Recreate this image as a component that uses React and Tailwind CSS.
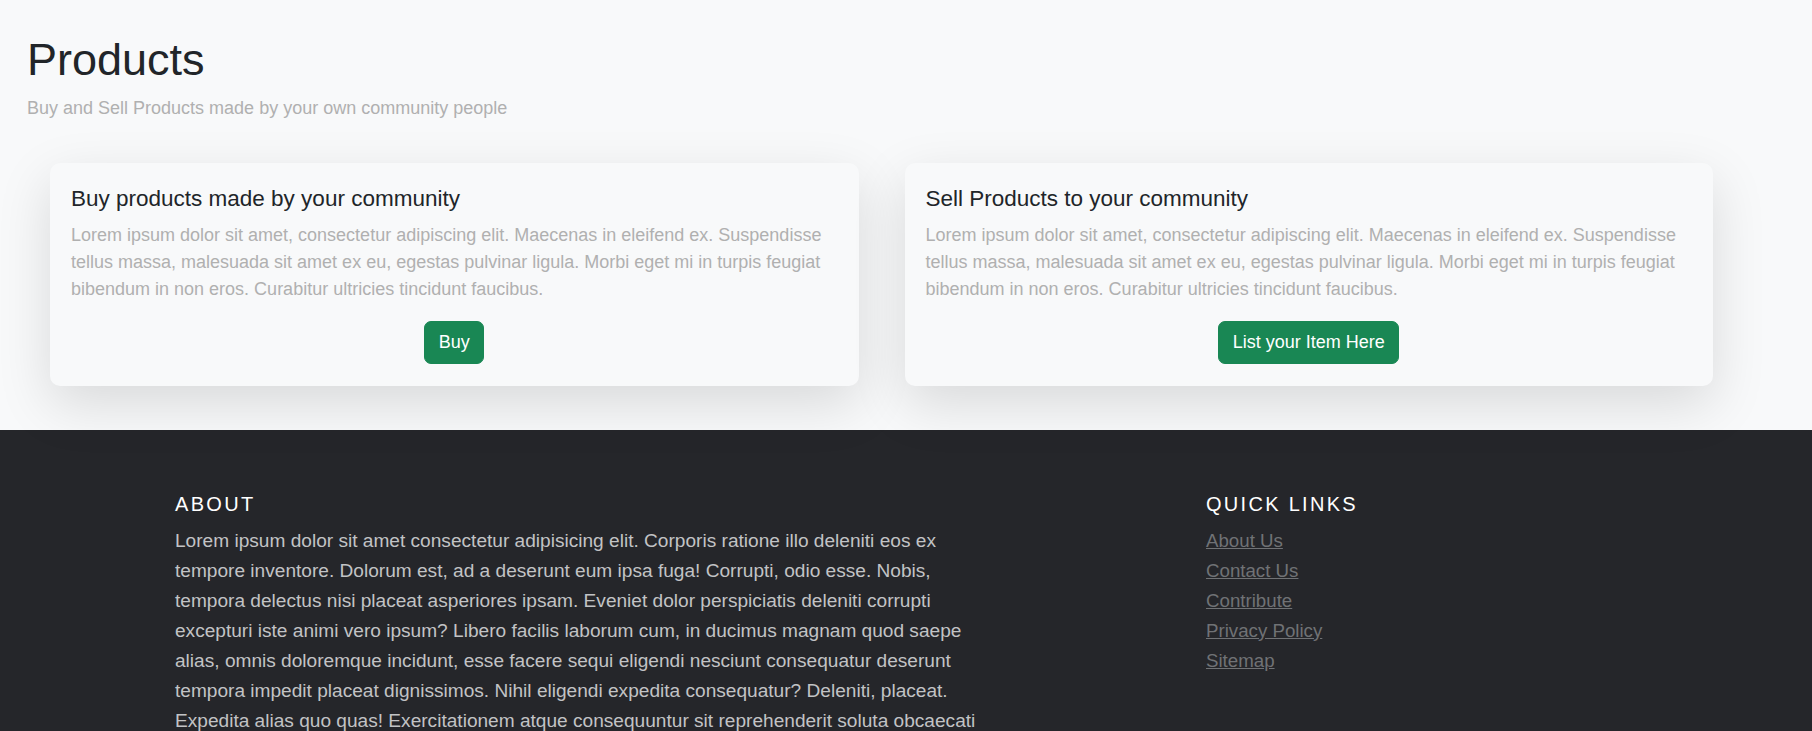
export default function App() {
  const cards = [
    {
      title: "Buy products made by your community",
      button: "Buy",
    },
    {
      title: "Sell Products to your community",
      button: "List your Item Here",
    },
  ];

  const links = ["About Us", "Contact Us", "Contribute", "Privacy Policy", "Sitemap"];

  return (
    <div className="min-h-screen bg-[#f8f9fa] font-['Liberation_Sans',Arial,sans-serif]">
      {/* Header */}
      <header className="px-[27px] pt-[33px]">
        <h1 className="text-[45px] leading-[54px] text-[#212529] mb-[8px]">Products</h1>
        <p className="text-[18px] leading-[27px] text-[#b0b0b0]">
          Buy and Sell Products made by your own community people
        </p>
      </header>

      {/* Cards */}
      <section className="flex gap-[46px] pl-[50px] pr-[99px] pt-[41px] pb-[44px]">
        {cards.map((card) => (
          <div
            key={card.title}
            className="flex-1 rounded-[10px] bg-[#f8f9fa] shadow-[0_18px_54px_rgba(0,0,0,0.13)] pt-[22px] pb-[22px] px-[21px]"
          >
            <h5 className="text-[22.5px] leading-[27px] text-[#212529] mb-[10px]">{card.title}</h5>
            <p className="text-[18px] leading-[27px] text-[#b0b0b0] mb-[18px]">
              Lorem ipsum dolor sit amet, consectetur adipiscing elit. Maecenas in eleifend ex.
              Suspendisse tellus massa, malesuada sit amet ex eu, egestas pulvinar ligula. Morbi eget
              mi in turpis feugiat bibendum in non eros. Curabitur ultricies tincidunt faucibus.
            </p>
            <div className="text-center">
              <button className="rounded-[7px] border border-[#198754] bg-[#198754] px-[13.5px] py-[6.75px] text-[18px] leading-[27px] text-white">
                {card.button}
              </button>
            </div>
          </div>
        ))}
      </section>

      {/* Footer */}
      <footer className="bg-[#25262a] pt-[62px] pb-[54px]">
        <div className="flex pl-[175px]">
          <div className="w-[825px]">
            <h5 className="text-[20px] leading-[24px] tracking-[2.3px] text-white mb-[10px]">ABOUT</h5>
            <p className="text-[19.1px] leading-[30px] text-[#c2c3c5]">
              Lorem ipsum dolor sit amet consectetur adipisicing elit. Corporis ratione illo deleniti
              eos ex tempore inventore. Dolorum est, ad a deserunt eum ipsa fuga! Corrupti, odio esse.
              Nobis, tempora delectus nisi placeat asperiores ipsam. Eveniet dolor perspiciatis
              deleniti corrupti excepturi iste animi vero ipsum? Libero facilis laborum cum, in ducimus
              magnam quod saepe alias, omnis doloremque incidunt, esse facere sequi eligendi nesciunt
              consequatur deserunt tempora impedit placeat dignissimos. Nihil eligendi expedita
              consequatur? Deleniti, placeat. Expedita alias quo quas! Exercitationem atque
              consequuntur sit reprehenderit soluta obcaecati quibusdam, nemo voluptatum ipsam.
            </p>
          </div>
          <div className="ml-[206px]">
            <h5 className="text-[20px] leading-[24px] tracking-[2.3px] text-white mb-[10px]">QUICK LINKS</h5>
            <ul className="text-[18.7px] leading-[30px]">
              {links.map((l) => (
                <li key={l}>
                  <a href="#" className="text-[#707275] underline">
                    {l}
                  </a>
                </li>
              ))}
            </ul>
          </div>
        </div>
      </footer>
    </div>
  );
}
